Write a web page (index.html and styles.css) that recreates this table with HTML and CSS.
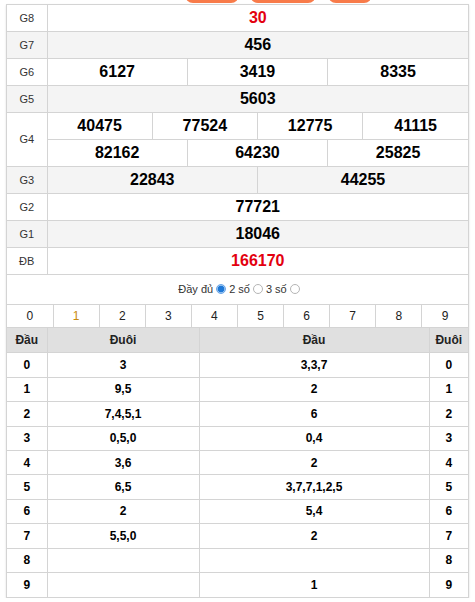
FILE: index.html
```html
<!DOCTYPE html>
<html lang="vi">
<head>
<meta charset="utf-8">
<title>Kết quả</title>
<link rel="stylesheet" href="styles.css">
</head>
<body>
<div class="page">
  <div class="tabs">
    <span class="tab tab-a"></span>
    <span class="tab tab-b"></span>
    <span class="tab tab-c"></span>
  </div>
  <div class="box">
    <table class="kq">
      <colgroup>
        <col class="col-label">
        <col class="col-n"><col class="col-n"><col class="col-n"><col class="col-n">
        <col class="col-n"><col class="col-n"><col class="col-n"><col class="col-n">
        <col class="col-n"><col class="col-n"><col class="col-n"><col class="col-n">
      </colgroup>
      <tr><td class="label">G8</td><td class="num red" colspan="12">30</td></tr>
      <tr class="alt"><td class="label">G7</td><td class="num" colspan="12">456</td></tr>
      <tr><td class="label">G6</td><td class="num" colspan="4">6127</td><td class="num" colspan="4">3419</td><td class="num" colspan="4">8335</td></tr>
      <tr class="alt"><td class="label">G5</td><td class="num" colspan="12">5603</td></tr>
      <tr><td class="label" rowspan="2">G4</td><td class="num" colspan="3">40475</td><td class="num" colspan="3">77524</td><td class="num" colspan="3">12775</td><td class="num" colspan="3">41115</td></tr>
      <tr><td class="num" colspan="4">82162</td><td class="num" colspan="4">64230</td><td class="num" colspan="4">25825</td></tr>
      <tr class="alt"><td class="label">G3</td><td class="num" colspan="6">22843</td><td class="num" colspan="6">44255</td></tr>
      <tr><td class="label">G2</td><td class="num" colspan="12">77721</td></tr>
      <tr class="alt"><td class="label">G1</td><td class="num" colspan="12">18046</td></tr>
      <tr><td class="label">ĐB</td><td class="num red" colspan="12">166170</td></tr>
    </table>

    <div class="mode">
      <span class="mode-text">Đầy đủ</span>
      <span class="radio checked"></span>
      <span class="mode-text">2 số</span>
      <span class="radio"></span>
      <span class="mode-text">3 số</span>
      <span class="radio"></span>
    </div>

    <table class="digits">
      <tr>
        <td>0</td><td class="hl">1</td><td>2</td><td>3</td><td>4</td>
        <td>5</td><td>6</td><td>7</td><td>8</td><td>9</td>
      </tr>
    </table>

    <table class="loto">
      <colgroup>
        <col class="lc-1"><col class="lc-2"><col class="lc-3"><col class="lc-4">
      </colgroup>
      <tr class="head"><th>Đầu</th><th>Đuôi</th><th>Đầu</th><th>Đuôi</th></tr>
      <tr><td>0</td><td>3</td><td>3,3,7</td><td>0</td></tr>
      <tr><td>1</td><td>9,5</td><td>2</td><td>1</td></tr>
      <tr><td>2</td><td>7,4,5,1</td><td>6</td><td>2</td></tr>
      <tr><td>3</td><td>0,5,0</td><td>0,4</td><td>3</td></tr>
      <tr><td>4</td><td>3,6</td><td>2</td><td>4</td></tr>
      <tr><td>5</td><td>6,5</td><td>3,7,7,1,2,5</td><td>5</td></tr>
      <tr><td>6</td><td>2</td><td>5,4</td><td>6</td></tr>
      <tr><td>7</td><td>5,5,0</td><td>2</td><td>7</td></tr>
      <tr><td>8</td><td></td><td></td><td>8</td></tr>
      <tr><td>9</td><td></td><td>1</td><td>9</td></tr>
    </table>
  </div>
</div>
</body>
</html>
```

FILE: styles.css
```css
html, body {
  margin: 0;
  padding: 0;
  background: #fff;
}

body {
  font-family: "Liberation Sans", Arial, sans-serif;
  color: #000;
}

.page {
  padding-left: 6px;
  width: 463px;
}

.tabs {
  height: 4px;
  overflow: hidden;
  display: flex;
  align-items: flex-end;
  padding-left: 179px;
}

.tab {
  display: block;
  height: 20px;
  margin-top: -16px;
  margin-bottom: 1px;
  background: #f87b4a;
  border-radius: 8px;
  flex: none;
}

.tab-a { width: 54px; }
.tab-b { width: 66px; margin-left: 11px; }
.tab-c { width: 44px; margin-left: 12px; }

.box {
  border: 1px solid #d4d4d4;
  box-shadow: 0 1px 2px rgba(0, 0, 0, 0.12);
  background: #fff;
}

table {
  border-collapse: collapse;
  border-style: hidden;
  table-layout: fixed;
  width: 461px;
}

td, th {
  padding: 0;
  border: 1px solid #d4d4d4;
  text-align: center;
  vertical-align: middle;
}

/* results table */
.col-label { width: 40px; }
.col-n { width: 35.08px; }

.kq tr { height: 26.9px; }

.kq .alt td { background: #f4f4f4; }

.kq .label {
  font-size: 11px;
  color: #333;
}

.kq .num {
  font-size: 16px;
  font-weight: bold;
  color: #000;
}

.kq .num.red { color: #e3000f; }

/* mode line */
.mode {
  height: 29px;
  border-top: 1px solid #d4d4d4;
  border-bottom: 1px solid #d4d4d4;
  display: flex;
  align-items: center;
  justify-content: center;
  font-size: 11px;
  color: #333;
}

.mode-text {
  margin: 0 3px;
}

.radio {
  width: 8px;
  height: 8px;
  border: 1px solid #b5b5b5;
  border-radius: 50%;
  background: #fff;
  box-sizing: content-box;
}

.radio.checked {
  border-color: #6aa6e8;
  background: radial-gradient(circle, #1e78d7 0 3px, #9cc6f0 3.6px);
}

/* digits row */
.digits tr { height: 22px; }

.digits td {
  font-size: 12px;
  color: #222;
}

.digits td.hl { color: #c98a10; }

/* loto table */
.lc-1 { width: 40px; }
.lc-2 { width: 152px; }
.lc-3 { width: 230px; }
.lc-4 { width: 39px; }

.loto {
  border-top: 1px solid #d4d4d4;
}

.loto .head { height: 25.5px; }

.loto th {
  background: #e0e0e0;
  font-size: 12px;
  font-weight: bold;
  color: #222;
}

.loto tr { height: 24.4px; }

.loto td {
  font-size: 12px;
  font-weight: bold;
  color: #000;
}
```
